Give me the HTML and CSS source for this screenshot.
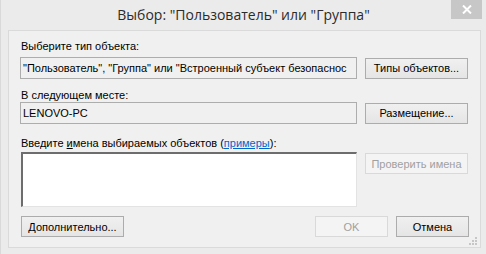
FILE: index.html
```html
<!DOCTYPE html>
<html lang="ru">
<head>
    <meta charset="UTF-8">
    <title>Выбор: "Пользователь" или "Группа"</title>
    <link rel="stylesheet" href="styles.css">
</head>
<body>

<div class="window">
    <div class="titlebar">
        <span></span>
        <div class="title">Выбор: "Пользователь" или "Группа"</div>
        <div class="close">
            <svg width="10" height="9" viewBox="0 0 10 9">
                <path d="M1 0.5 L9 8.5 M9 0.5 L1 8.5" stroke="#fff" stroke-width="2"/>
            </svg>
        </div>
    </div>

    <div class="client">
        <div class="label first">Выберите тип объекта:</div>
        <div class="row">
            <div class="field">"Пользователь", "Группа" или "Встроенный субъект безопаснос</div>
            <button class="btn">Типы объектов...</button>
        </div>

        <div class="label second">В следующем месте:</div>
        <div class="row">
            <div class="field">LENOVO-PC</div>
            <button class="btn">Размещение...</button>
        </div>

        <div class="label third">Введите <u>и</u>мена выбираемых объектов (<a href="#">примеры</a>):</div>
        <div class="row top">
            <textarea class="names"></textarea>
            <button class="btn" disabled>Проверить имена</button>
        </div>

        <div class="footer">
            <button class="btn">Дополнительно...</button>
            <div class="actions">
                <button class="btn small" disabled>OK</button>
                <button class="btn small">Отмена</button>
            </div>
        </div>

        <!-- уголок изменения размера -->
        <svg class="grip" width="9" height="9" viewBox="0 0 9 9">
            <rect x="6" y="0" width="2" height="2" fill="#c6c6c6"/>
            <rect x="3" y="3" width="2" height="2" fill="#c6c6c6"/>
            <rect x="6" y="3" width="2" height="2" fill="#c6c6c6"/>
            <rect x="0" y="6" width="2" height="2" fill="#c6c6c6"/>
            <rect x="3" y="6" width="2" height="2" fill="#c6c6c6"/>
            <rect x="6" y="6" width="2" height="2" fill="#c6c6c6"/>
        </svg>
    </div>
</div>

</body>
</html>
```

FILE: styles.css
```css
body {
    margin: 0;
    background-color: #ebebeb;
    font-family: "Liberation Sans", Arial, sans-serif;
    font-size: 11px;
    color: #000;
}

.window {
    width: 486px;
    height: 254px;
    box-sizing: border-box;
    border-left: 1px solid #d9d9d9;
}

.titlebar {
    height: 30px;
    display: grid;
    grid-template-columns: 1fr auto 1fr;
    align-items: start;
}

.title {
    font-family: "Open Sans", "Noto Sans", sans-serif;
    font-size: 14px;
    color: #2b2b2b;
    line-height: 20px;
    padding-top: 5px;
}

.close {
    justify-self: end;
    width: 31px;
    height: 19px;
    margin-right: 4px;
    background-color: #c7c7c7;
    display: flex;
    justify-content: center;
    align-items: center;
}

.client {
    position: relative;
    margin-left: 7px;
    width: 473px;
    height: 218px;
    box-sizing: border-box;
    background-color: #f0f0f0;
    border: 1px solid #dadada;
    padding: 0 11px 0 12px;
}

.label {
    line-height: 13px;
    height: 13px;
    white-space: nowrap;
}

.label.first {
    margin-top: 9px;
    margin-bottom: 4px;
}

.label.second {
    margin-top: 10px;
    margin-bottom: 0;
}

.label.third {
    margin-top: 13px;
    margin-bottom: 2px;
}

.label a {
    color: #0066cc;
}

.row {
    display: flex;
    align-items: center;
    gap: 8px;
    margin-left: -1px;
}

.row.top {
    align-items: flex-start;
}

.field {
    width: 337px;
    height: 22px;
    box-sizing: border-box;
    border: 1px solid #adadad;
    line-height: 20px;
    padding-left: 2px;
    white-space: nowrap;
    overflow: hidden;
}

.names {
    width: 336px;
    height: 55px;
    margin: 0 0 0 1px;
    box-sizing: border-box;
    background-color: #fff;
    border-style: solid;
    border-width: 2px 1px 1px 2px;
    border-color: #6d6d6d #e3e3e3 #e3e3e3 #6d6d6d;
    resize: none;
}

.row.top .btn {
    margin-top: 1px;
}

.btn {
    width: 103px;
    height: 21px;
    box-sizing: border-box;
    padding: 0;
    font-family: "Liberation Sans", Arial, sans-serif;
    font-size: 11px;
    color: #000;
    background: linear-gradient(#f0f0f0, #e5e5e5);
    border: 1px solid #acacac;
}

.btn.small {
    width: 73px;
}

.btn:disabled {
    background: #f4f4f4;
    border-color: #d9d9d9;
    color: #a0a0a0;
}

.footer {
    display: flex;
    justify-content: space-between;
    margin-top: 9px;
}

.actions {
    display: flex;
    gap: 8px;
}

.grip {
    position: absolute;
    right: 2px;
    bottom: 1px;
}
```
